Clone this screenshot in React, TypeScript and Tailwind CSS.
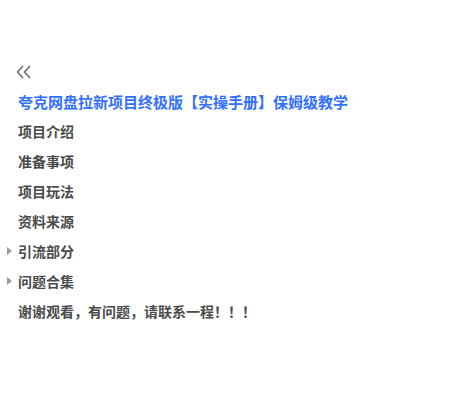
export default function App() {
  const items: { label: string; caret?: boolean }[] = [
    { label: "项目介绍" },
    { label: "准备事项" },
    { label: "项目玩法" },
    { label: "资料来源" },
    { label: "引流部分", caret: true },
    { label: "问题合集", caret: true },
    { label: "谢谢观看，有问题，请联系一程！！！" },
  ];

  return (
    <div
      className="w-[451px] h-[414px] bg-white pt-[62px]"
      style={{ fontFamily: '"Noto Sans CJK SC", "Noto Sans", sans-serif' }}
    >
      <div className="pl-[16px] h-[20px] flex items-center">
        <svg width="16" height="14" viewBox="0 0 16 14" fill="none" stroke="#5f6368" strokeWidth="1.4">
          <path d="M7 1L1.5 7L7 13" />
          <path d="M14 1L8.5 7L14 13" />
        </svg>
      </div>
      <div className="pl-[18px] mt-[10px] text-[15px] leading-[20px] font-bold text-[#3370ff]">
        夸克网盘拉新项目终极版【实操手册】保姆级教学
      </div>
      <div className="mt-[4px]">
        {items.map((it) => (
          <div key={it.label} className="relative h-[30px] flex items-center pl-[18px]">
            {it.caret && (
              <span className="absolute left-[7px] top-[11px] w-0 h-0 border-y-[4px] border-y-transparent border-l-[5px] border-l-[#9a9a9a]" />
            )}
            <span className="text-[14px] font-bold text-[#4a4a4a]">{it.label}</span>
          </div>
        ))}
      </div>
    </div>
  );
}
